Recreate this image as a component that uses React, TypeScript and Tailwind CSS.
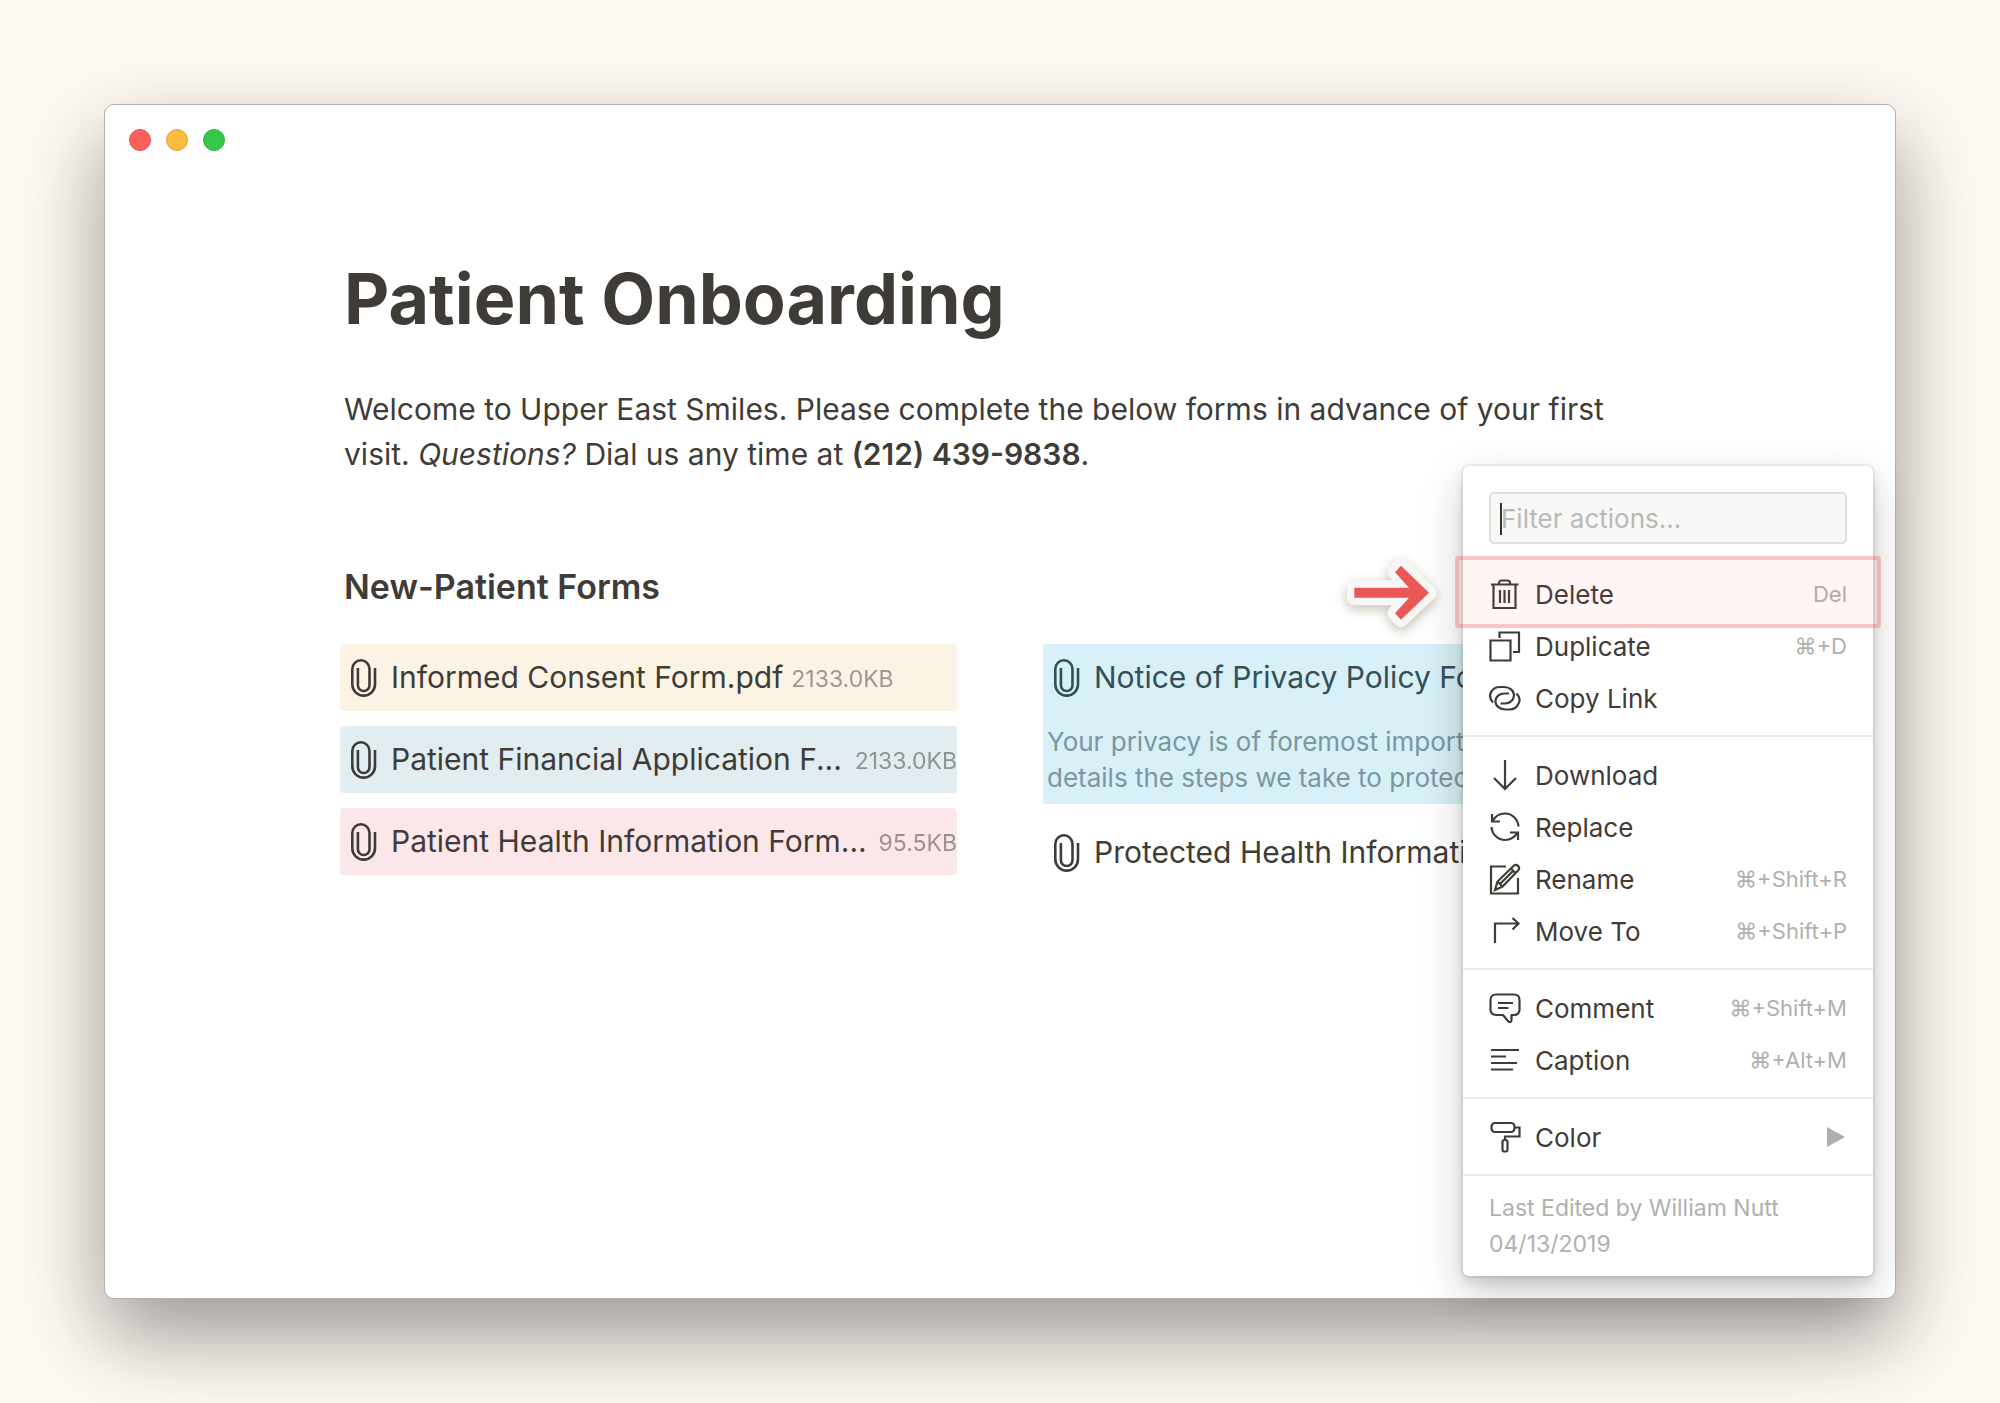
import type { ReactNode } from "react";

function Icon({ children }: { children: ReactNode }) {
  return (
    <svg
      viewBox="0 0 32 32"
      className="size-8 shrink-0"
      fill="none"
      stroke="currentColor"
      strokeWidth="2.2"
      aria-hidden="true"
    >
      {children}
    </svg>
  );
}

function PaperclipIcon() {
  return (
    <svg
      viewBox="0 0 26 38"
      className="h-[38px] w-[26px] shrink-0"
      fill="none"
      stroke="currentColor"
      strokeWidth="2.6"
      aria-hidden="true"
    >
      <path d="M24 9V25.3A11.35 11.35 0 0 1 1.3 25.3V9.9A8.6 8.6 0 0 1 18.5 9.9V26.2A5.8 5.8 0 0 1 6.9 26.2V9" />
    </svg>
  );
}

const icons = {
  trash: (
    <Icon>
      <path d="M2 6.5H29.5M4.5 6.5V30H26.5V6.5M10 6.5V5C10 3.5 11 2.5 12.5 2.5H18.5C20 2.5 21 3.500 21 5V6.5M11 12V25M15.5 12V25M20 12V25" />
    </Icon>
  ),
  duplicate: (
    <Icon>
      <path d="M1.5 10.5H21.5V30.5H1.5ZM10.5 8V2.5H30V22H24" />
    </Icon>
  ),
  link: (
    <Icon>
      <path d="M4 20.5C1 17 0 13 2.5 9.5C4.5 6 7 5 11 5H15C20.5 5 25 8.5 25 13C25 18 21 21.5 16 21.5H11.5M27.5 11.5C31 15 31.500 19 29 22.500C27 26.500 24 27.500 20.500 27.500H16.500C11 27.500 6.500 24 6.500 19.500C6.500 14.500 10.500 11.500 15.500 11.500H20" />
    </Icon>
  ),
  download: (
    <Icon>
      <path d="M16 1V29M5 19L16 30L27 19" />
    </Icon>
  ),
  replace: (
    <Icon>
      <path d="M4 9.5C6.5 5 11 2.5 16 2.5C23 2.5 29 8 29.5 15.5M3 3V10.5H11M28 22C25.5 26.5 21 29 16 29C9 29 3 23.5 2.5 16M29 29V21.5H21" />
    </Icon>
  ),
  rename: (
    <Icon>
      <path d="M17 3.500H2V30.500H29V15M6 27L8.500 18.500L25 2.500C27.500 0.500 31.500 4 29.500 7L13.500 23.500ZM8.500 18.500L13.500 23.500M22 5.500L27 10.500M11 21L25 7" />
    </Icon>
  ),
  move: (
    <Icon>
      <path d="M6 28V8.500H29M23.500 3L29.500 8.500L23.500 14.500" />
    </Icon>
  ),
  comment: (
    <Icon>
      <path
        strokeLinejoin="round"
        d="M7 2.500H25C28.500 2.500 30.500 4.500 30.500 8V17.500C30.500 21 28.500 23 25 23H22.500V28C22.500 30.500 20.500 31 18.500 28.500L14 23H7C3.500 23 1.500 21 1.500 17.500V8C1.500 4.500 3.500 2.500 7 2.500Z"
      />
      <path d="M9 11H24M9 16H19.500" />
    </Icon>
  ),
  caption: (
    <Icon>
      <path d="M2 6H30M2 12.500H17M2 19H28M2 25.500H24" />
    </Icon>
  ),
  color: (
    <Icon>
      <rect x="2.5" y="2" width="23" height="9" rx="3.5" />
      <path d="M26 6.500H30.500V15.500H16V19.500" />
      <rect x="13.5" y="19" width="5" height="11.5" rx="2" />
    </Icon>
  ),
};

type Action = {
  label: string;
  icon: ReactNode;
  shortcut?: string;
  highlighted?: boolean;
  submenu?: boolean;
};

const sections: Action[][] = [
  [
    { label: "Delete", icon: icons.trash, shortcut: "Del", highlighted: true },
    { label: "Duplicate", icon: icons.duplicate, shortcut: "⌘+D" },
    { label: "Copy Link", icon: icons.link },
  ],
  [
    { label: "Download", icon: icons.download },
    { label: "Replace", icon: icons.replace },
    { label: "Rename", icon: icons.rename, shortcut: "⌘+Shift+R" },
    { label: "Move To", icon: icons.move, shortcut: "⌘+Shift+P" },
  ],
  [
    { label: "Comment", icon: icons.comment, shortcut: "⌘+Shift+M" },
    { label: "Caption", icon: icons.caption, shortcut: "⌘+Alt+M" },
  ],
  [{ label: "Color", icon: icons.color, submenu: true }],
];

type FileRowProps = {
  name: string;
  size?: string;
  fill?: boolean;
  className?: string;
};

function FileRow({ name, size, fill, className = "" }: FileRowProps) {
  return (
    <a href="#" className={`flex h-[67px] items-center rounded pl-[11px] ${className}`}>
      <PaperclipIcon />
      <span className={`ml-3.5 whitespace-nowrap text-[30px] leading-[45px] ${fill ? "flex-1" : ""}`}>
        {name}
      </span>
      {size && <span className="ml-2 mt-1 shrink-0 text-[23px] opacity-50">{size}</span>}
    </a>
  );
}

function MenuItem({ action }: { action: Action }) {
  return (
    <li className="relative">
      <button type="button" className="flex h-[52px] w-full items-center px-[26px] text-left">
        {action.icon}
        <span className="ml-3.5 flex-1 text-[26px]">{action.label}</span>
        {action.shortcut && <span className="text-[22px] text-[#b0b0af]">{action.shortcut}</span>}
        {action.submenu && (
          <svg viewBox="0 0 18 20" className="mr-0.5 h-5 w-[18px]" aria-hidden="true">
            <path d="M0 0L18 10L0 20Z" fill="#aeaead" />
          </svg>
        )}
      </button>
      {action.highlighted && (
        <span className="pointer-events-none absolute -inset-x-2 -top-3 z-10 h-[72px] rounded-[3px] border-4 border-[#eb5757]/30 bg-[#ff5050]/6" />
      )}
    </li>
  );
}

function PointerArrow() {
  return (
    <svg
      viewBox="0 0 100 85"
      className="absolute right-full top-[84px] mr-[23px] h-[85px] w-[100px] overflow-visible drop-shadow-[0_4px_6px_rgba(90,80,40,0.35)]"
      strokeLinejoin="round"
      aria-hidden="true"
    >
      <path
        d="M14.300 37.700H69L55 22.300L61 15.700L89 42.700L61 69.700L55 63.300L69 47.700H14.300Z"
        fill="#f9f7f5"
        stroke="#f9f7f5"
        strokeWidth="15"
      />
      <path
        d="M14.300 37.700H69L55 22.300L61 15.700L89 42.700L61 69.700L55 63.300L69 47.700H14.300Z"
        fill="#eb5757"
      />
    </svg>
  );
}

function ActionMenu() {
  return (
    <div className="absolute bottom-[22px] right-[22px] w-[410px] rounded-md bg-white shadow-[0_0_0_2px_rgba(15,15,15,0.06),0_6px_12px_rgba(15,15,15,0.12),0_17px_45px_rgba(15,15,15,0.2)]">
      <PointerArrow />
      <div className="relative mx-[26px] mb-3 pt-[26px]">
        <input
          type="text"
          aria-label="Filter actions"
          placeholder="Filter actions..."
          className="block h-[52px] w-full rounded-[5px] border-2 border-[#dfdfdd] bg-[#f8f8f6] px-2.5 text-[26px] outline-none placeholder:text-[#b9b9b7]"
        />
        <span className="absolute left-[11px] top-[37px] h-8 w-0.5 bg-[#37352f]" />
      </div>
      {sections.map((section) => (
        <ul key={section[0].label} className="border-b-2 border-[#ececeb] pb-[11px] pt-3">
          {section.map((action) => (
            <MenuItem key={action.label} action={action} />
          ))}
        </ul>
      ))}
      <p className="px-[26px] py-3.5 text-[23px] leading-9 text-[#b0b0af]">
        Last Edited by William Nutt
        <br />
        04/13/2019
      </p>
    </div>
  );
}

export default function App() {
  return (
    <main className="flex min-h-screen bg-[#fff9f3] p-26 font-['Inter',sans-serif] text-[#3f3c37]">
      <div className="relative flex-1 rounded-[10px] border border-[#b3b0ac] bg-white shadow-[0_36px_84px_rgba(0,0,0,0.4)]">
        <div className="flex gap-[15px] px-6 pt-6">
          <span className="size-[22px] rounded-full border border-[#e2524f] bg-[#fc605c]" />
          <span className="size-[22px] rounded-full border border-[#e0a43c] bg-[#fdbc40]" />
          <span className="size-[22px] rounded-full border border-[#2bb440] bg-[#34c84a]" />
        </div>

        <div className="mx-auto w-full max-w-[1320px] pt-[105px]">
          <div className="px-1">
            <h1 className="text-[70px] font-bold leading-[86px]">Patient Onboarding</h1>
            <p className="mt-[45px] text-[30px] leading-[45px]">
              Welcome to Upper East Smiles. Please complete the below forms in advance of your first
              visit. <em>Questions?</em> Dial us any time at{" "}
              <strong className="font-semibold">(212) 439-9838</strong>.
            </p>
            <h2 className="mt-[87px] text-[34px] font-semibold leading-[45px]">New-Patient Forms</h2>
          </div>

          <div className="mt-[35px] grid grid-cols-2 gap-[86px]">
            <div className="flex flex-col gap-[15px]">
              <FileRow name="Informed Consent Form.pdf" size="2133.0KB" className="bg-[#fbf3e4]" />
              <FileRow
                name="Patient Financial Application F..."
                size="2133.0KB"
                fill
                className="bg-[#e2edf1]"
              />
              <FileRow
                name="Patient Health Information Form..."
                size="95.5KB"
                fill
                className="bg-[#fbe7e9]"
              />
            </div>

            <div className="flex flex-col gap-[15px]">
              <div className="bg-[#d8f0f7] pb-2 text-[#354f57]">
                <FileRow name="Notice of Privacy Policy Form.pdf" />
                <p className="mt-[13px] px-1 text-[26px] leading-9 text-[#7b979f]">
                  Your privacy is of foremost importance. This
                  <br />
                  details the steps we take to protect your
                </p>
              </div>
              <FileRow name="Protected Health Information.pdf" />
            </div>
          </div>
        </div>

        <ActionMenu />
      </div>
    </main>
  );
}
